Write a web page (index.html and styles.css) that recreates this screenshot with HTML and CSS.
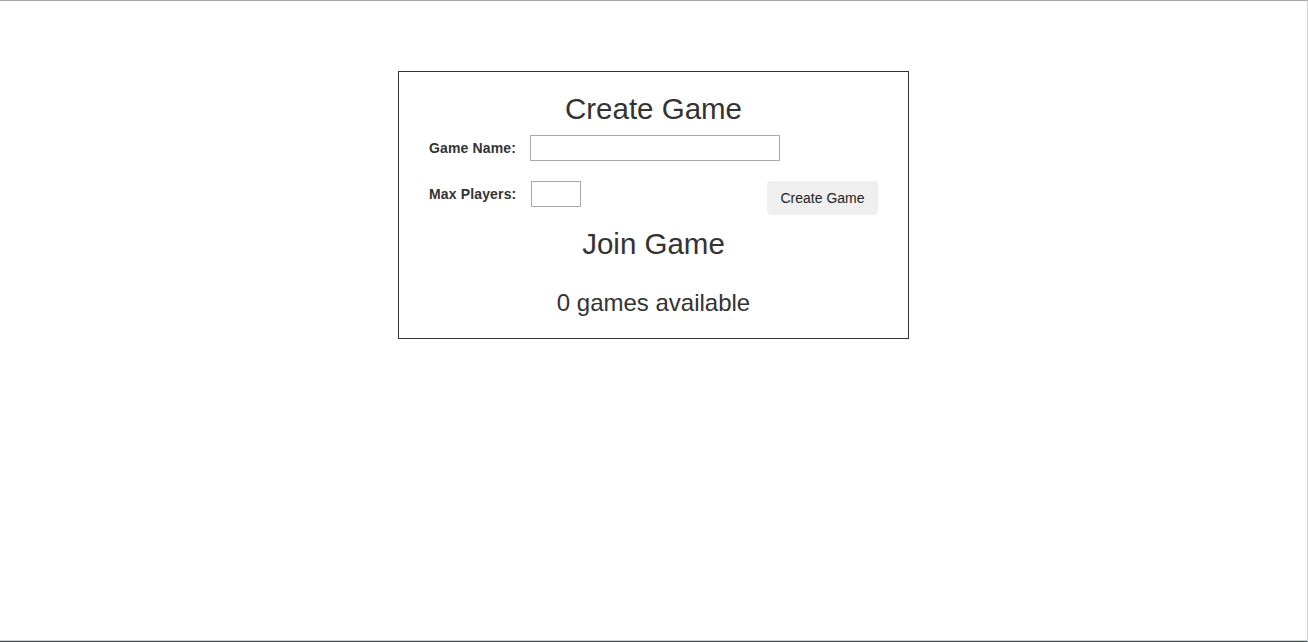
FILE: index.html
```html
<!DOCTYPE html>
<html>
<head>
<meta charset="utf-8">
<title>Game Lobby</title>
<link rel="stylesheet" href="styles.css">
</head>
<body>
<div class="frame">
  <div class="lobby">
    <h2 class="title">Create Game</h2>
    <div class="row row-name">
      <label class="label" for="gname">Game Name:</label>
      <input class="input input-name" id="gname" type="text">
    </div>
    <div class="row row-players">
      <label class="label label-top" for="gmax">Max Players:</label>
      <input class="input input-players" id="gmax" type="text">
      <button class="btn" type="button">Create Game</button>
    </div>
    <h2 class="title title-join">Join Game</h2>
    <p class="count">0 games available</p>
  </div>
</div>
</body>
</html>
```
FILE: styles.css
```css
html, body {
  margin: 0;
  padding: 0;
  background: #fff;
}
body {
  font-family: "Liberation Sans", Arial, sans-serif;
  color: #333;
}
.frame {
  width: 1308px;
  height: 642px;
  box-sizing: border-box;
  border-top: 1px solid #a6a6a6;
  border-right: 1px solid #d4d4d4;
  border-bottom: 1px solid #2f5c5c;
  box-shadow: inset 0 -1px 0 #cfcfcf;
  overflow: hidden;
}
.lobby {
  width: 511px;
  box-sizing: border-box;
  margin: 70px auto 0;
  border: 1px solid #333;
  padding: 20px 30px 21px;
}
.title {
  margin: 0;
  font-size: 29.5px;
  font-weight: normal;
  line-height: 34px;
  text-align: center;
  color: #333;
}
.row {
  display: flex;
}
.row-name {
  margin-top: 9px;
  align-items: center;
}
.row-players {
  margin-top: 20px;
  align-items: flex-start;
}
.label {
  font-size: 14px;
  font-weight: bold;
  line-height: 16px;
  letter-spacing: 0.15px;
  color: #333;
  margin-right: 14px;
}
.label-top {
  margin-top: 5px;
}
.input {
  box-sizing: border-box;
  height: 26px;
  border: 1px solid #aaa;
  border-radius: 0;
  padding: 2px 4px;
  margin: 0;
  font-family: inherit;
  font-size: 14px;
  background: #fff;
  outline: none;
}
.input-name {
  width: 250px;
}
.input-players {
  width: 50px;
  margin-left: 1px;
}
.btn {
  margin-left: auto;
  width: 111px;
  height: 34px;
  border: none;
  border-radius: 4px;
  background: #efefef;
  color: #222;
  font-family: inherit;
  font-size: 14px;
  padding: 0;
  cursor: pointer;
}
.title-join {
  margin-top: 12px;
}
.count {
  margin: 28px 0 0;
  font-size: 24px;
  line-height: 28px;
  text-align: center;
  color: #333;
}
```
